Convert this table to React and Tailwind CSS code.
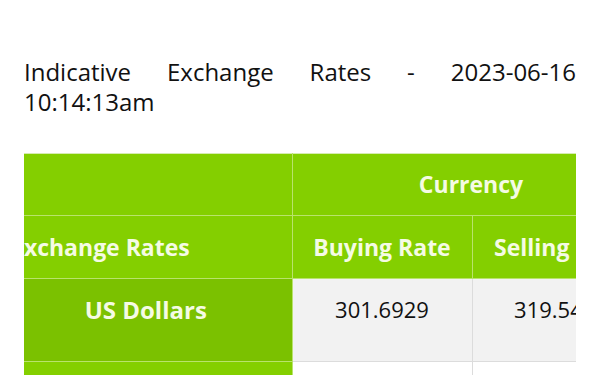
export default function App() {
    const font = { fontFamily: '"Open Sans", "Noto Sans", sans-serif' };
    return (
        <div className="bg-white w-[600px] h-[375px] overflow-hidden" style={font}>
            <div className="px-6 pt-[57px]">
                <h1 className="text-[24px] leading-[30px] font-normal text-[#111] text-justify [text-align-last:left]">
                    Indicative Exchange Rates - 2023-06-16 10:14:13am
                </h1>
            </div>

            <div className="mx-6 mt-[36px] overflow-hidden">
                <table className="-ml-6 w-[650px] border-collapse table-fixed">
                    <colgroup>
                        <col className="w-[292px]" />
                        <col className="w-[180px]" />
                        <col className="w-[178px]" />
                    </colgroup>
                    <thead>
                        <tr className="h-[62px] bg-[#84cf00]">
                            <th className="border border-[#b9e36c] border-l-0 border-t-[#d6ecb0]"></th>
                            <th
                                colSpan={2}
                                className="border border-[#b9e36c] border-t-[#d6ecb0] text-[23px] font-bold text-[#f5fbe4] text-center"
                            >
                                Currency
                            </th>
                        </tr>
                        <tr className="h-[63px] bg-[#84cf00]">
                            <th className="border border-[#b9e36c] border-l-0 text-[23px] font-bold text-[#f5fbe4] text-left pl-[11px] whitespace-nowrap">
                                Exchange Rates
                            </th>
                            <th className="border border-[#b9e36c] text-[23px] font-bold text-[#f5fbe4] text-center whitespace-nowrap">
                                Buying Rate
                            </th>
                            <th className="border border-[#b9e36c] text-[23px] font-bold text-[#f5fbe4] text-center whitespace-nowrap">
                                Selling Rate
                            </th>
                        </tr>
                    </thead>
                    <tbody>
                        <tr className="h-[83px]">
                            <td className="bg-[#7bc100] border border-[#b9e36c] border-l-0 align-top pt-[13px] text-center text-[24px] font-bold text-[#f5fbe4]">
                                US Dollars
                            </td>
                            <td className="bg-[#f2f2f2] border border-[#dcdcdc] align-top pt-[14px] text-center text-[22px] text-[#111]">
                                301.6929
                            </td>
                            <td className="bg-[#f2f2f2] border border-[#dcdcdc] align-top pt-[14px] text-center text-[22px] text-[#111]">
                                319.5424
                            </td>
                        </tr>
                        <tr className="h-[83px]">
                            <td className="bg-[#84cf00] border border-[#b9e36c] border-l-0 align-top pt-[13px] text-center text-[24px] font-bold text-[#f5fbe4]">
                                Euro
                            </td>
                            <td className="bg-white border border-[#dcdcdc] align-top pt-[14px] text-center text-[22px] text-[#111]">
                                329.3216
                            </td>
                            <td className="bg-white border border-[#dcdcdc] align-top pt-[14px] text-center text-[22px] text-[#111]">
                                349.6087
                            </td>
                        </tr>
                    </tbody>
                </table>
            </div>
        </div>
    );
}
